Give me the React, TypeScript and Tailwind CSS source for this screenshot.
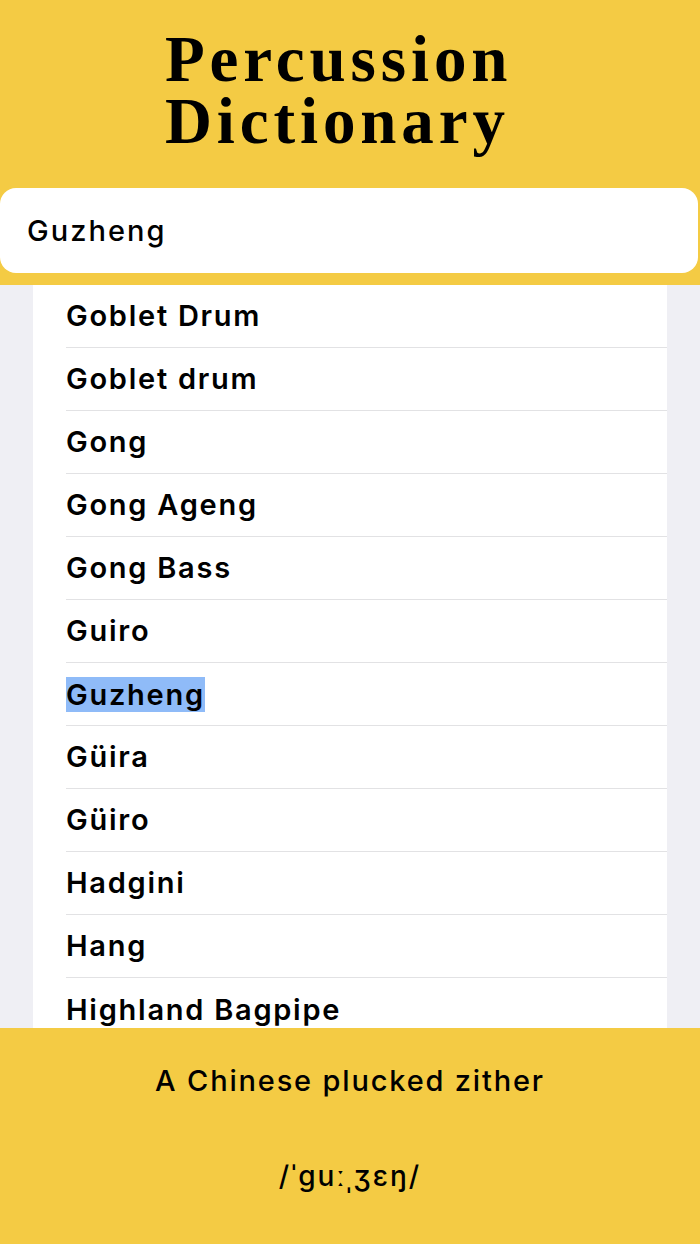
const items = [
  "Goblet Drum",
  "Goblet drum",
  "Gong",
  "Gong Ageng",
  "Gong Bass",
  "Guiro",
  "Guzheng",
  "Güira",
  "Güiro",
  "Hadgini",
  "Hang",
  "Highland Bagpipe",
];

const selected = "Guzheng";
const sans = "font-['Inter','Liberation_Sans',sans-serif]";

export default function App() {
  return (
    <div className={`h-[1244px] w-[700px] flex flex-col overflow-hidden text-black ${sans}`}>
      <header className="h-[285px] shrink-0 bg-[#f4cb44] flex flex-col">
        <h1 className="pl-[165px] pt-[28px] h-[188px] font-['Liberation_Serif',serif] font-bold text-[65px] leading-[62px] tracking-[0.075em]">
          <span className="block">Percussion</span>
          <span className="block">Dictionary</span>
        </h1>
        <div className="h-[85px] rounded-2xl bg-white mr-[2px] flex items-center px-[27px] text-[29px] font-medium tracking-[0.07em]">
          Guzheng
        </div>
      </header>

      <main className="flex-1 min-h-0 overflow-hidden bg-[#efeff4] px-[33px]">
        <ul className="bg-white h-full">
          {items.map((name, i) => (
            <li key={name} className="pl-[33px]">
              <div
                className={`h-[63px] flex items-center text-[29px] font-semibold tracking-[0.06em] ${
                  i < items.length - 1 ? "border-b border-[#e2e2e4]" : ""
                }`}
              >
                <span className={name === selected ? "bg-[#8fbbf8] leading-[35px]" : ""}>{name}</span>
              </div>
            </li>
          ))}
        </ul>
      </main>

      <footer className="h-[216px] shrink-0 bg-[#f4cb44] flex flex-col items-center pt-[34px] font-medium">
        <p className="text-[29px] leading-[38px] tracking-[0.063em]">A Chinese plucked zither</p>
        <p className="mt-[57px] text-[28px] leading-[38px] tracking-[0.07em]">/ˈɡuːˌʒɛŋ/</p>
      </footer>
    </div>
  );
}
